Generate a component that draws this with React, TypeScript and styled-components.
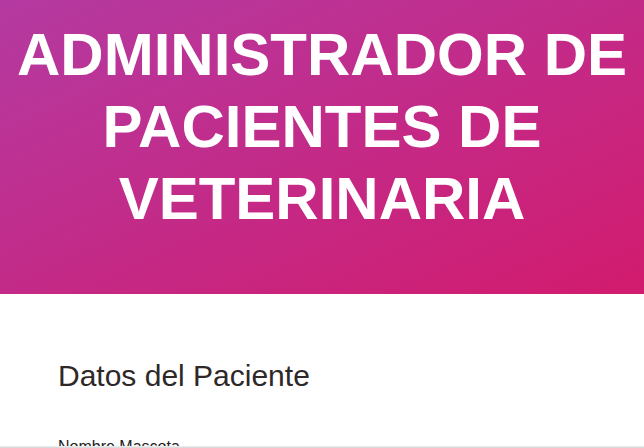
import React from "react";
import styled, { createGlobalStyle } from "styled-components";

const GlobalStyle = createGlobalStyle`
  html, body {
    margin: 0;
    padding: 0;
    background: #ffffff;
    font-family: "Liberation Sans", Arial, sans-serif;
  }
  * { box-sizing: border-box; }
`;

const Header = styled.header`
  background: linear-gradient(to bottom right, #b43aa1, #d21b6e);
  height: 294px;
  padding: 19px 0 0;
`;

const Title = styled.h1`
  margin: 0;
  color: #ffffff;
  font-family: "Liberation Sans", Arial, sans-serif;
  font-weight: 700;
  font-size: 60px;
  line-height: 72px;
  text-align: center;
  text-transform: uppercase;
`;

const Main = styled.main`
  padding: 65px 58px 0;
`;

const SectionTitle = styled.h2`
  margin: 0 0 45px;
  font-size: 30px;
  font-weight: 400;
  line-height: 34px;
  color: #2e2828;
`;

const Field = styled.div`
  display: flex;
  flex-direction: column;
  gap: 8px;
`;

const Label = styled.label`
  font-size: 16px;
  line-height: 18px;
  color: #222222;
`;

const Input = styled.input`
  height: 40px;
  border: 1px solid #cccccc;
  border-radius: 4px;
  padding: 0 10px;
  font-size: 16px;
`;

const BottomEdge = styled.div`
  position: fixed;
  left: 0;
  right: 0;
  bottom: 0;
  height: 2px;
  background: #dcdcdc;
  border-top: 1px solid #e8e8e8;
`;

export default function App() {
  return (
    <>
      <GlobalStyle />
      <Header>
        <Title>
          Administrador de
          <br />
          Pacientes de
          <br />
          Veterinaria
        </Title>
      </Header>
      <Main>
        <SectionTitle>Datos del Paciente</SectionTitle>
        <Field>
          <Label htmlFor="mascota">Nombre Mascota</Label>
          <Input id="mascota" type="text" />
        </Field>
      </Main>
      <BottomEdge />
    </>
  );
}
